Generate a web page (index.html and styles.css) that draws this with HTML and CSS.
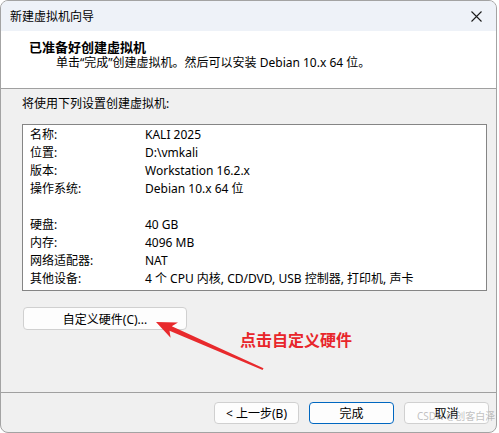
FILE: index.html
```html
<!DOCTYPE html>
<html lang="zh-CN">
<head>
    <meta charset="UTF-8">
    <meta name="viewport" content="width=device-width, initial-scale=1.0">
    <title>新建虚拟机向导</title>
    <link rel="stylesheet" href="styles.css">
</head>
<body>
    <div class="window">
        <div class="titlebar">
            <span class="title">新建虚拟机向导</span>
            <span class="close">
                <svg width="11" height="11" viewBox="0 0 11 11">
                    <path d="M0.5 0.5 L10.5 10.5 M10.5 0.5 L0.5 10.5" stroke="#1b1b1b" stroke-width="1.1" fill="none"/>
                </svg>
            </span>
        </div>

        <div class="header">
            <div class="header-title">已准备好创建虚拟机</div>
            <div class="header-sub">单击“完成”创建虚拟机。然后可以安装 Debian 10.x 64 位。</div>
        </div>

        <div class="content">
            <div class="intro">将使用下列设置创建虚拟机:</div>
            <div class="summary">
                <div class="row"><span class="key">名称:</span><span>KALI 2025</span></div>
                <div class="row"><span class="key">位置:</span><span>D:\vmkali</span></div>
                <div class="row"><span class="key">版本:</span><span>Workstation 16.2.x</span></div>
                <div class="row"><span class="key">操作系统:</span><span>Debian 10.x 64 位</span></div>
                <div class="row"></div>
                <div class="row"><span class="key">硬盘:</span><span>40 GB</span></div>
                <div class="row"><span class="key">内存:</span><span>4096 MB</span></div>
                <div class="row"><span class="key">网络适配器:</span><span>NAT</span></div>
                <div class="row"><span class="key">其他设备:</span><span>4 个 CPU 内核, CD/DVD, USB 控制器, 打印机, 声卡</span></div>
            </div>
            <button class="btn btn-custom">自定义硬件(C)...</button>
        </div>

        <div class="footer">
            <button class="btn">&lt; 上一步(B)</button>
            <button class="btn btn-default">完成</button>
            <button class="btn">取消</button>
        </div>

        <!-- 标注：箭头和说明文字 -->
        <svg class="arrow" width="499" height="433" viewBox="0 0 499 433">
            <polygon points="156,322 178,322.5 171.8,326.3 263.5,368.2 262.6,370 169.5,330.8 170.6,337.8" fill="#e82a2d"/>
        </svg>
        <div class="note">点击自定义硬件</div>
        <div class="watermark">CSDN @创客白泽</div>
    </div>
</body>
</html>
```

FILE: styles.css
```css
body {
    margin: 0;
    background: #ffffff;
    font-family: "Noto Sans", "Noto Sans CJK SC", sans-serif;
    font-size: 12px;
    color: #000;
}

.window {
    position: relative;
    width: 497px;
    height: 433px;
    box-sizing: border-box;
    border: 1px solid #a3a3a3;
    border-radius: 8px;
    background: #f0f0f0;
    display: flex;
    flex-direction: column;
    overflow: hidden;
}

.titlebar {
    height: 30px;
    background: #eef2f8;
    display: flex;
    align-items: center;
    justify-content: space-between;
    padding: 0 14px 0 9px;
}

.close {
    display: flex;
}

.header {
    background: #fff;
    border-bottom: 1px solid #a0a0a0;
    padding: 8px 0 0 28px;
    height: 49px;
}

.header-title {
    font-weight: bold;
    font-size: 13px;
    line-height: 16px;
}

.header-sub {
    line-height: 16px;
    padding-left: 27px;
}

.content {
    height: 303px;
    box-sizing: border-box;
    padding: 7px 0 0 21px;
}

.intro {
    line-height: 16px;
}

.summary {
    margin-top: 12px;
    width: 465px;
    height: 167px;
    box-sizing: border-box;
    background: #fff;
    border: 1px solid #858585;
    padding: 1px 0 0 7px;
}

.row {
    display: flex;
    height: 18px;
    line-height: 18px;
}

.key {
    width: 115px;
}

.btn {
    font-family: inherit;
    font-size: 12px;
    color: #000;
    background: #fdfdfd;
    border: 1px solid #d0d0d0;
    border-radius: 4px;
    width: 85px;
    height: 22px;
    padding: 0;
}

.btn-custom {
    display: block;
    margin: 16px 0 0 1px;
    width: 164px;
    height: 23px;
}

.btn-default {
    border-color: #0067c0;
}

.footer {
    flex: 1;
    border-top: 1px solid #a0a0a0;
    display: flex;
    justify-content: flex-end;
    align-items: flex-start;
    gap: 10px;
    padding: 9px 7px 0 0;
}

.arrow {
    position: absolute;
    left: -1px;
    top: -1px;
    pointer-events: none;
}

.note {
    position: absolute;
    left: 239px;
    top: 328px;
    font-family: "Noto Sans CJK SC", sans-serif;
    font-weight: bold;
    font-size: 16px;
    line-height: 20px;
    color: #e8262b;
}

.watermark {
    position: absolute;
    left: 416px;
    top: 409px;
    font-size: 10px;
    line-height: 13px;
    white-space: nowrap;
    color: rgba(140, 140, 140, 0.55);
}
```
